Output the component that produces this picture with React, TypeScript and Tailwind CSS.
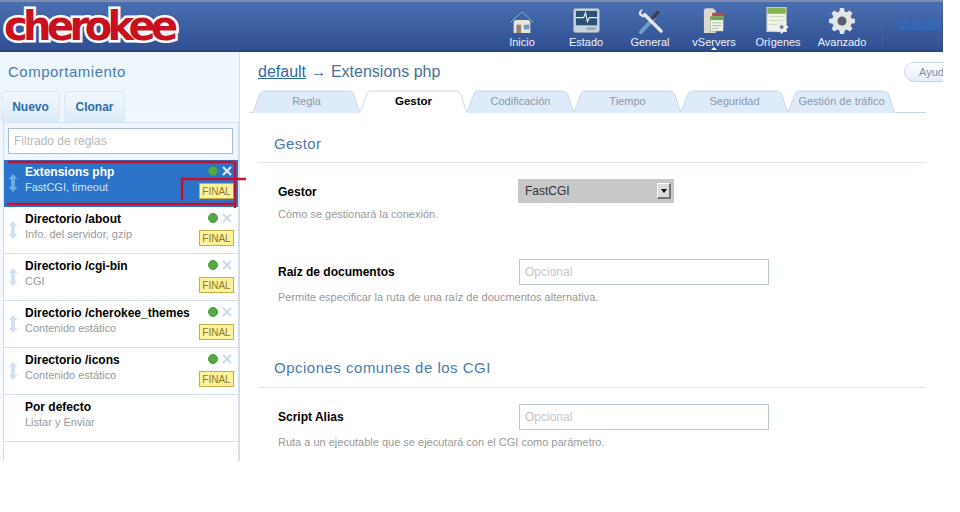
import React from 'react';

const HomeIcon = () => (
  <svg width="28" height="26" viewBox="0 0 30 28">
    <path d="M6 13h18v13a1 1 0 0 1-1 1H7a1 1 0 0 1-1-1z" fill="#e8e4d8" />
    <rect x="9" y="18" width="5" height="9" fill="#8d8474" />
    <rect x="17" y="18" width="6" height="5" fill="#6d97c4" />
    <path d="M1 15 15 2l14 13-2 2L15 6 3 17z" fill="#5f8fc0" stroke="#274a7f" strokeWidth="0.8" />
  </svg>
);

const MonitorIcon = () => (
  <svg width="27" height="25" viewBox="0 0 28 26">
    <rect x="0.5" y="0.5" width="27" height="25" rx="2.500" fill="#c9d3de" stroke="#8ea0b8" />
    <rect x="3" y="3" width="22" height="15" fill="#2c5078" />
    <path d="M3 10h8l2-5 2 9 2-4h8" fill="none" stroke="#e8f2fb" strokeWidth="1.2" />
    <rect x="14" y="20" width="10" height="3" rx="1.500" fill="#9aa8b8" />
  </svg>
);

const ToolsIcon = () => (
  <svg width="27" height="27" viewBox="0 0 28 28">
    <path d="M4 26 17 12" stroke="#6f9cc8" strokeWidth="4" strokeLinecap="round" />
    <path d="M21 3 24 6 15 15 13 13z" fill="#39414e" />
    <path d="M25 25 8 8" stroke="#e4e6ea" strokeWidth="3.500" strokeLinecap="round" />
    <path d="M2 5 5 2l1 1-2 3 2 2 3-2 1 2-3 3H6L2 8z" fill="#e4e6ea" />
  </svg>
);

const FilesIcon = () => (
  <svg width="22" height="26" viewBox="0 0 24 28">
    <path d="M1 3a3 3 0 0 1 3-3h7l3 3v24H1z" fill="#dcd8ce" />
    <rect x="10" y="5" width="13" height="15" fill="#b9494c" />
    <rect x="8" y="9" width="14" height="16" fill="#f2f3ee" stroke="#8aa58a" strokeWidth="0.6" />
    <rect x="8" y="9" width="14" height="4" fill="#6aa84f" />
    <path d="M10 16h10M10 19h10M10 22h7" stroke="#a9b8a9" />
  </svg>
);

const GearPath =
  'M11 0h4l.7 3.4 2 .9 3-1.9 2.8 2.8-1.9 3 .9 2L26 11v4l-3.5.7-.9 2 1.9 3-2.8 2.8-3-1.9-2 .9L15 26h-4l-.7-3.5-2-.9-3 1.9-2.8-2.8 1.9-3-.9-2L0 15v-4l3.5-.7.9-2-1.9-3 2.8-2.8 3 1.9 2-.9z';

const OriginIcon = () => (
  <svg width="24" height="27" viewBox="0 0 24 28">
    <rect x="0.5" y="0.5" width="20" height="25" fill="#f0f3ea" stroke="#c5cdbd" />
    <rect x="1" y="1" width="19" height="6" fill="#86b44c" />
    <path d="M3 10h15M3 14h15M3 18h15" stroke="#c9d7b8" />
    <g transform="translate(9 14) scale(0.52)">
      <path d={GearPath} fill="#eef0f2" />
      <circle cx="13" cy="13" r="4" fill="#7d8794" />
    </g>
  </svg>
);

const GearIcon = () => (
  <svg width="26" height="26" viewBox="0 0 26 26">
    <path d={GearPath} fill="#e3e5e8" />
    <circle cx="13" cy="13" r="4.500" fill="#56606e" />
  </svg>
);

const navItems = [
  { label: 'Inicio', icon: <HomeIcon /> },
  { label: 'Estado', icon: <MonitorIcon /> },
  { label: 'General', icon: <ToolsIcon /> },
  { label: 'vServers', icon: <FilesIcon />, active: true },
  { label: 'Orígenes', icon: <OriginIcon /> },
  { label: 'Avanzado', icon: <GearIcon /> },
];

const rules = [
  { title: 'Extensions php', sub: 'FastCGI, timeout', selected: true },
  { title: 'Directorio /about', sub: 'Info. del servidor, gzip' },
  { title: 'Directorio /cgi-bin', sub: 'CGI' },
  { title: 'Directorio /cherokee_themes', sub: 'Contenido estático' },
  { title: 'Directorio /icons', sub: 'Contenido estático' },
];

const tabs = ['Regla', 'Gestor', 'Codificación', 'Tiempo', 'Seguridad', 'Gestión de tráfico'];

const Arrow = ({ color }: { color: string }) => (
  <svg width="10" height="18" viewBox="0 0 10 18">
    <path d="M5 0 9.500 5H7v8h2.500L5 18 .5 13H3V5H.5z" fill={color} />
  </svg>
);

const Tab = ({ label, active }: { label: string; active?: boolean }) => (
  <div className={`relative flex h-[23px] w-[107px] items-center justify-center ${active ? 'text-[11.5px] font-bold text-black' : 'text-[11px] text-[#8b98a8]'}`}>
    <svg className="absolute inset-0 h-full w-full" viewBox="0 0 107 23" preserveAspectRatio="none">
      <path
        d="M-1 23C2 20 4 10 7 4 8.500 1 10 1 13 1H95C98 1 99.500 2 101 5 103 11 105 20 108 23"
        fill={active ? '#ffffff' : '#deebfa'}
        stroke="#c9d6e4"
      />
    </svg>
    <span className="relative">{label}</span>
  </div>
);

const Rule = ({ title, sub, selected }: { title: string; sub: string; selected?: boolean }) => (
  <div className={`flex h-[47px] border-b ${selected ? 'border-[#2a73c9] bg-[#2a73c9]' : 'border-[#d3e0ec] bg-white'}`}>
    <div className="flex w-[17px] shrink-0 items-center justify-center">
      <Arrow color={selected ? '#6aaee8' : '#d3e2f0'} />
    </div>
    <div className="min-w-0 flex-1 pl-[4px] pt-[5px]">
      <div className={`text-[12px] font-bold leading-[14px] ${selected ? 'text-white' : 'text-black'}`}>{title}</div>
      <div className={`mt-[1px] text-[11px] leading-[14px] ${selected ? 'text-[#cfe3f7]' : 'text-[#999999]'}`}>{sub}</div>
    </div>
    <div className="flex w-[42px] shrink-0 flex-col items-end pr-[4px] pt-[6px]">
      <div className="flex items-center gap-[4px] pr-[2px]">
        <span className="h-[10px] w-[10px] rounded-full border border-[#4c9a40] bg-[#55a845]" />
        <svg width="10" height="10" viewBox="0 0 10 10">
          <path d="M1 1 9 9M9 1 1 9" stroke={selected ? '#e6f0fa' : '#cfd9e4'} strokeWidth="2" />
        </svg>
      </div>
      <span className="mt-[7px] flex h-[16px] w-[35px] items-center justify-center border border-[#c4b04a] bg-[#fdf19a] text-[10px] text-[#8a7a2c]">FINAL</span>
    </div>
  </div>
);

const FormRow = ({ label, desc, placeholder, select }: { label: string; desc: string; placeholder?: string; select?: boolean }) => (
  <div className="pl-[20px]">
    <div className="flex items-center">
      <div className={`w-[240px] text-[12px] font-bold text-black ${select ? 'pt-[2px]' : ''}`}>{label}</div>
      {select ? (
        <div className="flex h-[24px] w-[156px] items-center justify-between bg-[#c8c8c8] pl-[7px] pr-[3px] text-[12px] text-[#333333]">
          FastCGI
          <span className="flex h-[16px] w-[14px] items-center justify-center border-t border-l border-b-2 border-r-2 border-t-white border-l-white border-b-[#777777] border-r-[#777777] bg-[#dcdcdc]">
            <span className="h-0 w-0 border-x-[3px] border-t-[4px] border-x-transparent border-t-black" />
          </span>
        </div>
      ) : (
        <div className="ml-[1px] flex h-[26px] w-[250px] items-center border border-[#b9c6d4] bg-white pl-[5px] text-[12px] text-[#c6c6c6]">{placeholder}</div>
      )}
    </div>
    <div className={`${select ? 'mt-[4px]' : 'mt-[5px]'} text-[11px] leading-[14px] text-[#999999]`}>{desc}</div>
  </div>
);

const App = () => {
  return (
    <div className="flex h-[461px] w-[943px] flex-col overflow-hidden bg-white font-['Liberation_Sans',Arial,sans-serif]">
      {/* top bar */}
      <header className="flex h-[52px] shrink-0 items-stretch border-b-2 border-b-[#2a4680] border-t-2 border-t-[#7f8cb0] bg-gradient-to-b from-[#4a6fb0] to-[#2f4f92]">
        <div className="w-[490px] shrink-0 pl-[4px] pt-[6px]">
          <span className="block text-[40px] font-bold leading-[36px] tracking-[-4.6px] text-[#c8101e] [-webkit-text-stroke:5px_white] [font-family:'DejaVu_Sans',sans-serif] [paint-order:stroke_fill]">
            cherokee
          </span>
        </div>
        <nav className="flex">
          {navItems.map((item) => (
            <div key={item.label} className="relative flex w-[64px] flex-col items-center">
              <div className="flex h-[33px] items-center justify-center pt-[4px]">{item.icon}</div>
              <div className="text-[11px] leading-[14px] text-[#eef3fb]">{item.label}</div>
              {item.active && (
                <span className="absolute bottom-0 h-0 w-0 border-x-[3px] border-b-[3px] border-x-transparent border-b-white" />
              )}
            </div>
          ))}
        </nav>
        <div className="ml-[8px] mt-[4px] h-[40px] border-l border-[#42659f] pl-[15px] pt-[8px] text-[12px] text-[#2f6fc8] underline">Guardar</div>
      </header>

      <div className="flex min-h-0 flex-1">
        {/* rules panel */}
        <aside className="flex w-[240px] shrink-0 flex-col border-r border-[#d3e0ec] bg-gradient-to-b from-[#eef6fe] to-[#f8fbfe]">
          <div className="pl-[8px] pt-[10px] text-[15px] leading-[20px] tracking-[0.5px] text-[#4a7cb0]">Comportamiento</div>
          <div className="flex gap-[4px] pl-[1px] pt-[9px]">
            <div className="flex h-[31px] w-[59px] items-center justify-center rounded-[3px] border border-[#dbe7f2] bg-gradient-to-b from-[#f2f8fe] to-[#dcebf9] text-[12px] font-bold text-[#2f6ca8]">Nuevo</div>
            <div className="flex h-[31px] w-[61px] items-center justify-center rounded-[3px] border border-[#dbe7f2] bg-gradient-to-b from-[#f2f8fe] to-[#dcebf9] text-[12px] font-bold text-[#2f6ca8]">Clonar</div>
          </div>
          <div className="ml-[3px] flex-1 border-x border-t border-[#d3e0ec] bg-white">
            <div className="bg-[#eef6fe] pb-[6px] pl-[4px] pr-[5px] pt-[5px]">
              <div className="flex h-[26px] items-center border border-[#a9bccf] bg-white pl-[5px] text-[12px] text-[#b8b8b8]">Filtrado de reglas</div>
            </div>
            {rules.map((rule) => (
              <Rule key={rule.title} {...rule} />
            ))}
            <div className="h-[47px] border-b border-[#d3e0ec] pl-[21px] pt-[5px]">
              <div className="text-[12px] font-bold leading-[14px] text-black">Por defecto</div>
              <div className="mt-[1px] text-[11px] leading-[14px] text-[#999999]">Listar y Enviar</div>
            </div>
          </div>
        </aside>

        {/* main */}
        <main className="min-w-0 flex-1 pl-[10px]">
          <div className="flex h-[38px] items-start justify-between">
            <div className="pl-[8px] pt-[10px] text-[16px] leading-[20px] text-[#4a6f94]">
              <span className="text-[#2f6ca8] underline">default</span> → Extensions php
            </div>
            <div className="-mr-[11px] mt-[10px] flex h-[20px] w-[50px] items-center rounded-l-[10px] border border-[#c9d9e8] bg-gradient-to-b from-white to-[#e4eef8] pl-[14px] text-[11px] text-[#7b8fa5]">Ayuda</div>
          </div>
          <div className="w-[676px] border-b border-[#c9d6e4] pl-[3px]">
            <div className="-mb-[1px] flex">
              {tabs.map((t) => (
                <Tab key={t} label={t} active={t === 'Gestor'} />
              ))}
            </div>
          </div>

          <div className="w-[676px] pl-[8px]">
            <div className="border-b border-[#dde3ea] pb-[8px] pl-[16px] pt-[21px] text-[15px] leading-[20px] tracking-[0.4px] text-[#4a7cb0]">Gestor</div>
          </div>
          <div className="pl-[8px] pt-[16px]">
            <FormRow label="Gestor" desc="Cómo se gestionará la conexión." select />
          </div>
          <div className="pl-[8px] pt-[38px]">
            <FormRow label="Raíz de documentos" desc="Permite especificar la ruta de una raíz de doucmentos alternativa." placeholder="Opcional" />
          </div>
          <div className="w-[676px] pl-[8px]">
            <div className="border-b border-[#dde3ea] pb-[9px] pl-[16px] pt-[54px] text-[15px] leading-[20px] tracking-[0.5px] text-[#4a7cb0]">Opciones comunes de los CGI</div>
          </div>
          <div className="pl-[8px] pt-[16px]">
            <FormRow label="Script Alias" desc="Ruta a un ejecutable que se ejecutará con el CGI como parámetro." placeholder="Opcional" />
          </div>
        </main>
      </div>

      {/* hand-drawn red marks over the screenshot */}
      <svg className="pointer-events-none absolute left-0 top-0" width="250" height="215" viewBox="0 0 250 215">
        <path d="M8 162H235M7 204H235M235 162V208M246 179H182V200" fill="none" stroke="#c8102e" strokeWidth="2.500" />
      </svg>
    </div>
  );
};

export default App;
